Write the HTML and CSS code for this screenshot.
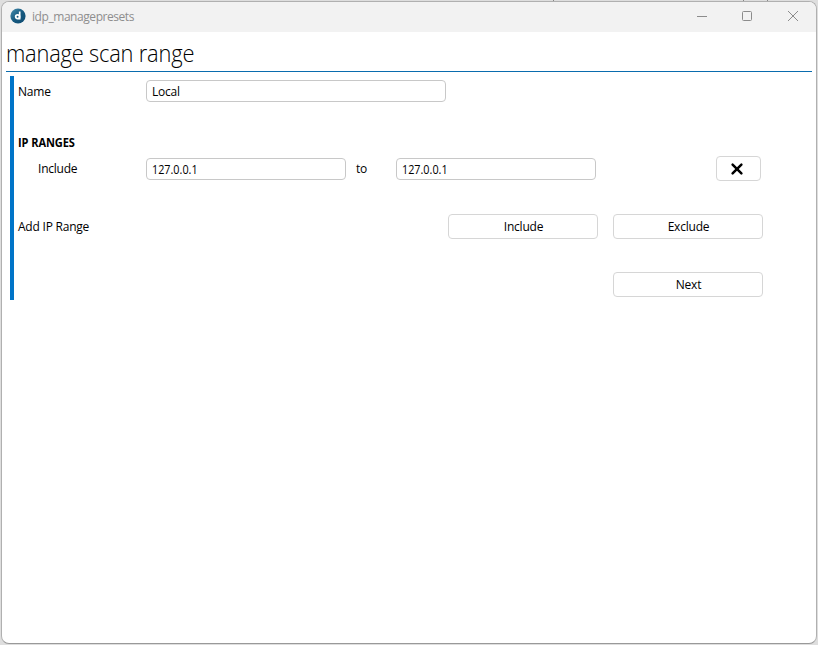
FILE: index.html
```html
<!DOCTYPE html>
<html lang="en">
<head>
<meta charset="utf-8">
<title>idp_managepresets</title>
<link rel="stylesheet" href="styles.css">
</head>
<body>
<div class="backdrop"><i></i><i></i><i></i></div>
<div class="window">
  <header class="titlebar">
    <svg class="logo" width="16" height="16" viewBox="0 0 16 16">
      <defs><linearGradient id="disc" x1="0" y1="0" x2="1" y2="1"><stop offset="0" stop-color="#4a90b0"/><stop offset=".5" stop-color="#175a80"/><stop offset="1" stop-color="#0e4a70"/></linearGradient></defs>
      <circle cx="8" cy="8" r="7.6" fill="url(#disc)"/>
      <circle cx="7.6" cy="8.8" r="1.9" fill="none" stroke="#fff" stroke-width="1.8"/>
      <path d="M9.7 3.6V11.6" stroke="#fff" stroke-width="1.7"/>
    </svg>
    <span class="caption">idp_managepresets</span>
    <svg class="controls" width="104" height="12" viewBox="0 0 104 12" fill="none" stroke="#8c8c8c">
      <path d="M1 6.5H11"/>
      <rect x="46.5" y="1.5" width="9" height="9" rx="1"/>
      <path d="M92 1L102 11M102 1L92 11"/>
    </svg>
  </header>
  <h1><span>manage scan range</span></h1>
  <main class="form">
    <div class="row name-row">
      <label class="name">Name</label>
      <div class="field wide"><span class="local">Local</span></div>
    </div>
    <h2><span>IP RANGES</span></h2>
    <div class="row range-row">
      <label class="indent">Include</label>
      <div class="field"><span class="ip">127.0.0.1</span></div>
      <label class="to">to</label>
      <div class="field"><span class="ip">127.0.0.1</span></div>
      <button class="remove" aria-label="Remove"><svg width="14" height="14" viewBox="0 0 14 14"><path d="M2.6 2.6L11.4 11.4M11.4 2.6L2.6 11.4" stroke="#000" stroke-width="2.5" stroke-linecap="round"/></svg></button>
    </div>
    <div class="row add-row">
      <label class="add">Add IP Range</label>
      <button>Include</button>
      <button>Exclude</button>
    </div>
    <div class="row next-row"><button>Next</button></div>
  </main>
</div>
</body>
</html>
```
FILE: styles.css
```css
* { box-sizing: border-box; }
body {
  margin: 0;
  width: 818px;
  height: 645px;
  padding: 1px;
  overflow: hidden;
  background: #dedede;
  color: #000;
  font: 12px/16px "Open Sans", "Noto Sans", sans-serif;
  letter-spacing: -0.22px;
}
.backdrop i { position: absolute; top: 0; left: 553px; width: 1px; height: 2px; background: #888; }
.backdrop i + i { left: 743px; }
.backdrop i + i + i { left: 767px; }
.window {
  position: relative;
  width: 816px;
  height: 643px;
  border: 1px solid #b0b0b0;
  border-bottom-color: #999;
  border-radius: 8px;
  background: #fff;
  overflow: hidden;
}
.titlebar { display: flex; align-items: center; height: 30px; padding: 0 16px 2px 8px; background: #f2f2f2; }
.caption { margin-left: 6px; padding-top: 1px; color: #8e8e8e; letter-spacing: -0.44px; }
.controls { margin-left: auto; }
h1 {
  height: 40px;
  margin: 0 4px;
  border-bottom: 1px solid #0a6cae;
  font-size: 23px;
  line-height: 42px;
  font-weight: 300;
  letter-spacing: -0.2px;
}
h1 span, h2 span, .ip { display: inline-block; transform-origin: 0 50%; }
h1 span { transform: scaleX(0.95); }
h2 span { transform: scaleX(0.92); }
.form { height: 224px; margin: 4px 4px 0 8px; border-left: 4px solid #0074c8; padding: 4px 0 0 4px; }
.row { display: flex; align-items: center; }
label { width: 128px; white-space: nowrap; }
.name { padding-top: 2px; }
.indent { padding-left: 20px; }
.to { width: 50px; padding-left: 10px; }
.field { width: 200px; height: 22px; border: 1px solid #c8c8c8; border-radius: 4px; padding: 3px 5px 1px; }
.field.wide { width: 300px; }
.ip { letter-spacing: 0; transform: scaleX(0.9); }
h2 { height: 16px; margin: 32px 0 8px; font-size: 12px; line-height: 17px; font-weight: 700; letter-spacing: -0.1px; }
button {
  display: flex;
  align-items: center;
  justify-content: center;
  width: 150px;
  height: 25px;
  padding: 0 0 0 1px;
  border: 1px solid #d6d6d6;
  border-radius: 4px;
  background: #fff;
  color: #000;
  font: inherit;
  letter-spacing: -0.22px;
}
.range-row { height: 22px; }
.remove { width: 45px; margin: -2px 0 0 120px; padding: 1px 3px 0 0; }
.add-row { margin-top: 34px; gap: 15px; }
.add { width: 415px; }
.next-row { margin: 33px 0 0 595px; }
```
